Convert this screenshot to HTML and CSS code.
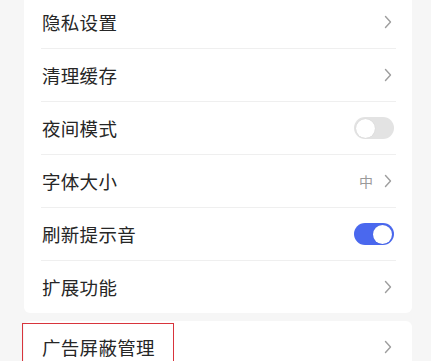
FILE: index.html
```
<!DOCTYPE html>
<html lang="zh">
<head>
<meta charset="utf-8">
<link rel="stylesheet" href="styles.css">
</head>
<body>
<div class="page">
  <div class="card first">
    <div class="row"><span class="label">隐私设置</span><span class="right"><svg class="chev" viewBox="0 0 8 14"><path d="M1.5 1.5 L6.5 7 L1.5 12.5"/></svg></span></div>
    <div class="row"><span class="label">清理缓存</span><span class="right"><svg class="chev" viewBox="0 0 8 14"><path d="M1.5 1.5 L6.5 7 L1.5 12.5"/></svg></span></div>
    <div class="row"><span class="label">夜间模式</span><span class="right"><span class="toggle off"><span class="knob"></span></span></span></div>
    <div class="row"><span class="label">字体大小</span><span class="right"><span class="value">中</span><svg class="chev" viewBox="0 0 8 14"><path d="M1.5 1.5 L6.5 7 L1.5 12.5"/></svg></span></div>
    <div class="row"><span class="label">刷新提示音</span><span class="right"><span class="toggle on"><span class="knob"></span></span></span></div>
    <div class="row last"><span class="label">扩展功能</span><span class="right"><svg class="chev" viewBox="0 0 8 14"><path d="M1.5 1.5 L6.5 7 L1.5 12.5"/></svg></span></div>
  </div>
  <div class="card second">
    <div class="row last"><span class="label">广告屏蔽管理</span><span class="right"><svg class="chev" viewBox="0 0 8 14"><path d="M1.5 1.5 L6.5 7 L1.5 12.5"/></svg></span></div>
    <div class="highlight"></div>
  </div>
</div>
</body>
</html>
```
FILE: styles.css
```
html, body {
  margin: 0;
  padding: 0;
  background: #f6f6f6;
  overflow: hidden;
}
body {
  width: 431px;
  height: 361px;
  font-family: "Noto Sans CJK SC", "Noto Sans", sans-serif;
  color: #262626;
}
.page {
  display: flex;
  flex-direction: column;
  gap: 8px;
  padding: 0 19px 0 24px;
  height: 361px;
  overflow: hidden;
}
.card {
  background: #fff;
  border-radius: 6px;
  position: relative;
  flex-shrink: 0;
}
.card.first {
  margin-top: -4px;
  border-top-left-radius: 0;
  border-top-right-radius: 0;
}
.row {
  box-sizing: border-box;
  height: 53px;
  margin: 0 16px 0 17px;
  border-bottom: 1px solid #efefef;
  display: flex;
  align-items: center;
  justify-content: space-between;
}
.row.last {
  border-bottom: none;
  height: 52px;
}
.label {
  font-size: 18.5px;
  letter-spacing: 0.3px;
  padding-left: 1px;
  line-height: 1;
}
.right {
  display: flex;
  align-items: center;
  gap: 11px;
}
.value {
  font-size: 14px;
  color: #9a9a9a;
  line-height: 1;
}
.chev {
  width: 8px;
  height: 14px;
  margin-right: 4px;
  fill: none;
  stroke: #9e9e9e;
  stroke-width: 1.4;
  stroke-linecap: round;
  stroke-linejoin: round;
}
.toggle {
  width: 40px;
  height: 22px;
  border-radius: 11px;
  display: flex;
  align-items: center;
  padding: 0 2px;
  box-sizing: border-box;
  margin-right: 2px;
}
.toggle.off {
  background: #e3e3e3;
  justify-content: flex-start;
}
.toggle.on {
  background: #4a68ee;
  justify-content: flex-end;
}
.knob {
  width: 19px;
  height: 19px;
  border-radius: 50%;
  background: #fff;
  box-shadow: 0 0 1px rgba(0,0,0,0.15);
}
.card.second {
  height: 52px;
}
.highlight {
  position: absolute;
  left: -2px;
  top: 2px;
  width: 150px;
  height: 50px;
  border: 1.5px solid #d8343c;
  border-bottom: none;
  box-sizing: content-box;
}
```
